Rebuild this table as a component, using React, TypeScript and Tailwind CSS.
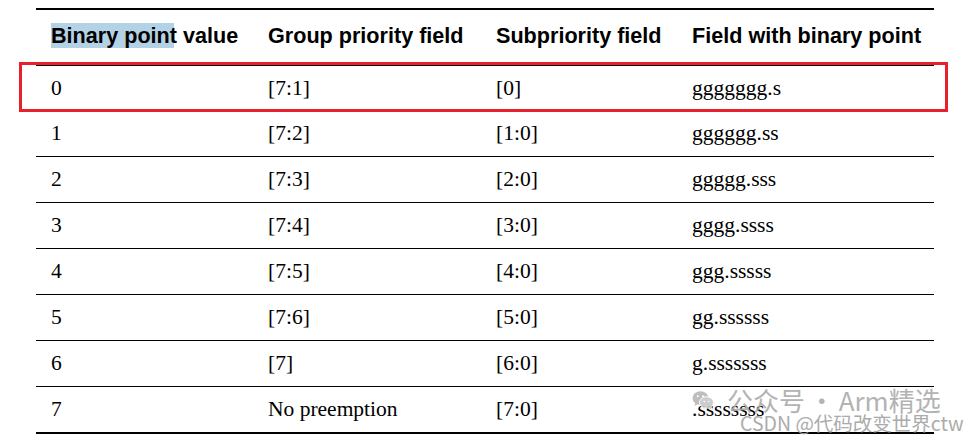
import React from "react";

const rows = [
  ["0", "[7:1]", "[0]", "ggggggg.s"],
  ["1", "[7:2]", "[1:0]", "gggggg.ss"],
  ["2", "[7:3]", "[2:0]", "ggggg.sss"],
  ["3", "[7:4]", "[3:0]", "gggg.ssss"],
  ["4", "[7:5]", "[4:0]", "ggg.sssss"],
  ["5", "[7:6]", "[5:0]", "gg.ssssss"],
  ["6", "[7]", "[6:0]", "g.sssssss"],
  ["7", "No preemption", "[7:0]", ".ssssssss"],
];

const cols = "grid grid-cols-[217px_228px_196px_257px]";

function WeChatIcon() {
  return (
    <svg width="22" height="20" viewBox="0 0 22 20" className="shrink-0">
      <ellipse cx="8.5" cy="8" rx="8" ry="6.8" fill="#b8b8b8" />
      <path d="M3.5 12.5 L2.5 16 L7 13.5 Z" fill="#b8b8b8" />
      <ellipse cx="14.5" cy="12.5" rx="7" ry="5.8" fill="#c8c8c8" stroke="#fff" strokeWidth="1" />
      <path d="M18.5 16.5 L19.5 19.5 L15.5 17.5 Z" fill="#c8c8c8" />
      <circle cx="5.8" cy="6.2" r="1" fill="#fff" />
      <circle cx="11" cy="6.2" r="1" fill="#fff" />
      <circle cx="12.3" cy="11.5" r="0.8" fill="#fff" />
      <circle cx="16.7" cy="11.5" r="0.8" fill="#fff" />
    </svg>
  );
}

export default function App() {
  return (
    <div className="relative w-[979px] h-[442px] bg-white overflow-hidden">
      <div className="ml-[36px] pt-[8px] w-[898px]">
        <div className="border-t-2 border-black">
          <div
            className={`${cols} h-[56px] pb-[2px] border-b-2 border-black items-center text-black font-bold text-[21.6px] font-['Liberation_Sans',Arial,sans-serif]`}
          >
            <div className="pl-[15px] whitespace-nowrap">
              <span className="bg-[#b4d2e5]">Binary poin</span>
              <span className="bg-[linear-gradient(to_right,#b4d2e5_55%,transparent_55%)]">t</span>
              {" value"}
            </div>
            <div className="pl-[15px] whitespace-nowrap">Group priority field</div>
            <div className="pl-[15px] whitespace-nowrap">Subpriority field</div>
            <div className="pl-[15px] whitespace-nowrap">Field with binary point</div>
          </div>
          {rows.map((r, i) => (
            <div
              key={r[0]}
              className={`${cols} items-center text-black text-[21.5px] font-['Liberation_Serif','Times_New_Roman',serif] border-black ${
                i === 0 ? "h-[45px] border-b" : i === rows.length - 1 ? "h-[47px] border-b-2" : "h-[46px] border-b"
              }`}
            >
              {r.map((c, j) => (
                <div key={j} className="pl-[15px] whitespace-nowrap">
                  {c}
                </div>
              ))}
            </div>
          ))}
        </div>
      </div>

      {/* red highlight box */}
      <div className="absolute left-[19px] top-[62px] w-[929px] h-[50px] border-[3px] border-[#e8202c]" />

      {/* watermark */}
      <div className="absolute left-[692px] top-[385px] flex flex-col items-start opacity-90 pointer-events-none">
        <div className="flex items-center gap-[13px] h-[30px]">
          <WeChatIcon />
          <span className="text-[26px] leading-none text-[#ababab] font-['Noto_Sans_CJK_SC','Noto_Sans',sans-serif] whitespace-nowrap">
            公众号<span className="mx-[-2px]"> · </span>Arm精选
          </span>
        </div>
        <div className="ml-[48px] -mt-[2px] text-[19.5px] leading-none text-[#a3a3a3] font-['Noto_Sans_CJK_SC','Noto_Sans',sans-serif] whitespace-nowrap">
          CSDN @代码改变世界ctw
        </div>
      </div>
    </div>
  );
}
